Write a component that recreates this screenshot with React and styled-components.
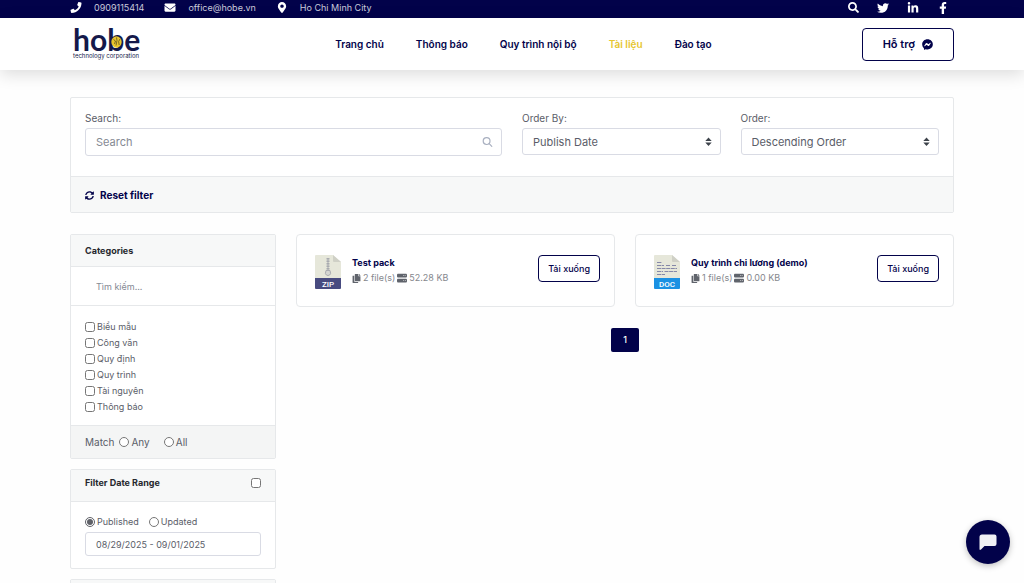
import { useState } from 'react'
import styled, { createGlobalStyle } from 'styled-components'
import {
    FaPhone, FaEnvelope, FaMapMarkerAlt, FaSearch, FaTwitter, FaLinkedinIn, FaFacebookF,
    FaFacebookMessenger, FaSyncAlt, FaCopy
} from 'react-icons/fa'
import { FaServer } from 'react-icons/fa6'

const navy = "#02024a"
const border = "#e6e8ea"
const muted = "#f7f8f8"

const GlobalStyle = createGlobalStyle`
    * {
        box-sizing: border-box;
    }
    body {
        margin: 0;
        background-color: #fefefe;
        color: #5a5d68;
        font-family: Inter, "Noto Sans", sans-serif;
        font-size: 9px;
        line-height: 16px;
    }
    button, input, select {
        font: inherit;
        color: inherit;
    }
    a {
        color: inherit;
        text-decoration: none;
    }
`
const Inner = styled.div`
    display: flex;
    align-items: center;
    padding: 0 70px;
`
const TopBar = styled.div`
    background-color: ${navy};
    color: #c9cadb;
`
const TopInner = styled(Inner)`
    height: 18px;
    padding-bottom: 3px;
    justify-content: space-between;
`
const Contacts = styled.div`
    display: flex;
    gap: 20px;
`
const Contact = styled.a`
    display: flex;
    align-items: center;
    gap: 12px;
    svg {
        width: 12px;
        height: 11px;
        color: white;
    }
`
const Socials = styled.div`
    display: flex;
    gap: 18px;
    padding-right: 5px;
    color: white;
`
const SocialLink = styled.a`
    display: flex;
    font-size: 12px;
`
const Header = styled.header`
    background-color: white;
    box-shadow: 0 4px 16px #00000024;
`
const HeaderInner = styled(Inner)`
    height: 52px;
    justify-content: space-between;
`
const Logo = styled.a`
    display: block;
    color: #14194a;
    padding: 0 3px 2px;
`
const LogoName = styled.div`
    display: flex;
    font-family: Lato, sans-serif;
    font-weight: 700;
    font-size: 30px;
    line-height: 25px;
`
const LogoLetter = styled.span`
    position: relative;
`
const LogoMark = styled.svg`
    position: absolute;
    left: 4px;
    top: 9px;
    width: 11px;
    height: 12px;
`
const Tagline = styled.div`
    font-size: 6px;
    line-height: 8px;
`
const Nav = styled.nav`
    flex: 1;
    display: flex;
    justify-content: center;
    gap: 32px;
    padding-left: 42px;
    font-size: 10px;
    font-weight: 600;
`
const NavLink = styled.a`
    color: ${props => props.$active ? "#e6c62f" : navy};
`
const OutlineButton = styled.button`
    display: flex;
    align-items: center;
    justify-content: center;
    gap: 7px;
    height: ${props => props.$large ? "33px" : "27px"};
    padding: 0 ${props => props.$large ? "20px" : "9px"};
    border: 1px solid ${navy};
    border-radius: 4px;
    background-color: white;
    color: ${navy};
    font-size: ${props => props.$large ? "11px" : "9px"};
    font-weight: ${props => props.$large ? 600 : 500};
    white-space: nowrap;
    cursor: pointer;
`
const Page = styled.main`
    padding: 27px 70px 0;
`
const Card = styled.section`
    background-color: white;
    border: 1px solid ${border};
    border-radius: 2px;
`
const Filters = styled.div`
    display: grid;
    grid-template-columns: repeat(4, 1fr);
    gap: 20px;
    padding: 12px 14px 20px;
    font-size: 11px;
`
const Field = styled.div`
    grid-column: span ${props => props.$span || 1};
    min-width: 0;
`
const FieldLabel = styled.label`
    display: block;
    margin-bottom: 2px;
    font-size: 10px;
`
const Control = styled.div`
    position: relative;
    svg {
        position: absolute;
        right: 9px;
        top: 50%;
        transform: translateY(-50%);
        pointer-events: none;
    }
`
const TextBox = styled.input`
    display: block;
    width: 100%;
    height: ${props => props.$small ? "24px" : "28px"};
    padding: 0 10px;
    border: 1px solid ${props => props.$plain ? "transparent" : "#d9dbe4"};
    border-radius: 3px;
    background-color: transparent;
    outline: none;
    &::placeholder {
        color: #858993;
    }
`
const Select = styled.select`
    display: block;
    width: 100%;
    height: 27px;
    padding: 0 10px;
    border: 1px solid #d9dbe4;
    border-radius: 3px;
    background-color: white;
    appearance: none;
`
const ResetBar = styled.div`
    padding: 10px 14px 9px;
    border-top: 1px solid ${border};
    background-color: ${muted};
`
const ResetButton = styled.button`
    display: flex;
    align-items: center;
    gap: 6px;
    padding: 0;
    border: 0;
    background: none;
    color: ${navy};
    font-size: 10px;
    font-weight: 700;
    cursor: pointer;
`
const Columns = styled.div`
    display: grid;
    grid-template-columns: repeat(4, 1fr);
    align-items: start;
    gap: 20px;
    margin-top: 21px;
`
const Sidebar = styled.aside`
    display: flex;
    flex-direction: column;
    gap: 10px;
`
const CardHeader = styled.div`
    display: flex;
    align-items: center;
    justify-content: space-between;
    min-height: 32px;
    padding: 0 14px ${props => props.$raised ? "6px" : 0};
    border-bottom: 1px solid ${border};
    background-color: ${muted};
    color: #26282e;
`
const CardTitle = styled.h2`
    margin: 0;
    font-size: 9px;
    font-weight: 700;
`
const CategorySearch = styled.div`
    padding: 7px 14px;
    border-bottom: 1px solid ${border};
`
const CategoryList = styled.div`
    display: flex;
    flex-direction: column;
    padding: 13px 14px 10px;
`
const Check = styled.label`
    display: flex;
    align-items: center;
    gap: 2px;
    input {
        width: 10px;
        height: 10px;
        margin: 0;
        accent-color: #5f6168;
    }
`
const MatchRow = styled.div`
    display: flex;
    align-items: center;
    gap: 14px;
    padding: 8px 14px;
    border-top: 1px solid ${border};
    background-color: #f4f5f5;
    font-size: 10px;
`
const MatchLabel = styled.span`
    margin-right: -9px;
`
const RangeBody = styled.div`
    padding: 12px 14px;
`
const RangeOptions = styled.div`
    display: flex;
    gap: 10px;
    margin-bottom: 2px;
`
const Results = styled.div`
    grid-column: span 3;
`
const ResultGrid = styled.div`
    display: grid;
    grid-template-columns: repeat(2, 1fr);
    gap: 20px;
`
const FileCard = styled(Card)`
    display: flex;
    align-items: flex-start;
    padding: 20px 14px 17px 18px;
    border-radius: 4px;
    svg {
        flex: none;
    }
`
const FileInfo = styled.div`
    flex: 1;
    min-width: 0;
    padding-left: 11px;
`
const FileTitle = styled.a`
    display: block;
    color: ${navy};
    font-weight: 700;
`
const FileMeta = styled.div`
    display: flex;
    align-items: center;
    gap: 2px;
    color: #85878d;
    line-height: 14px;
    svg {
        color: #60646c;
    }
`
const Pagination = styled.nav`
    display: flex;
    justify-content: center;
    margin-top: 21px;
`
const PageButton = styled.button`
    width: 28px;
    height: 24px;
    padding: 0;
    border: 0;
    border-radius: 2px;
    background-color: ${navy};
    color: white;
    font-weight: 500;
`
const ChatButton = styled.button`
    position: fixed;
    right: 14px;
    bottom: 19px;
    display: flex;
    align-items: center;
    justify-content: center;
    width: 44px;
    height: 44px;
    padding: 0;
    border: 0;
    border-radius: 50%;
    background-color: ${navy};
    box-shadow: 0 2px 6px #00000040;
    cursor: pointer;
`

const navItems = ["Trang chủ", "Thông báo", "Quy trình nội bộ", "Tài liệu", "Đào tạo"]
const categories = ["Biểu mẫu", "Công văn", "Quy định", "Quy trình", "Tài nguyên", "Thông báo"]
const files = [
    { type: "ZIP", title: "Test pack", count: 2, size: "52.28 KB" },
    { type: "DOC", title: "Quy trình chi lương (demo)", count: 1, size: "0.00 KB" },
]

function Arrows() {
    return (
        <svg width="7" height="10" viewBox="0 0 7 10" fill="#3d434b">
            <path d="M0.3 4L3.5 0.5L6.7 4ZM0.3 5.6L3.5 9.1L6.7 5.6Z" />
        </svg>
    )
}

function SearchGlass() {
    return (
        <svg width="11" height="11" viewBox="0 0 11 11" fill="none" stroke="#a9b0c0" strokeWidth="1.2" strokeLinecap="round">
            <circle cx="4.6" cy="4.6" r="3.4" />
            <path d="M7.2 7.2L9.8 9.8" />
        </svg>
    )
}

function FileIcon({ type }) {
    return (
        <svg width="26" height="34" viewBox="0 0 26 34">
            <path d="M1 0H18L26 7V24H0V1Q0 0 1 0Z" fill="#e6e7da" />
            <path d="M18 0L26 7H19Q18 7 18 6Z" fill="#cfd0c6" />
            {type === "ZIP"
                ? <g fill="none" stroke="#a9abb0">
                    <path d="M13 3V15" strokeWidth="3" strokeDasharray="1.5 1" />
                    <path d="M13 3V15" />
                    <path d="M11 15.5H15L15.6 18.5Q15 20.5 13 20.5Q11 20.5 10.4 18.5Z" fill="#d5d6d2" />
                </g>
                : <path d="M3 7.5H8M3 10.5H10M12 10.5H16M18 10.5H22M3 13.5H23M3 16.5H9M10.5 16.5H23M3 19.5H11" stroke="#8588a8" strokeWidth="1.2" strokeDasharray="4 0.6" />}
            <path d="M0 23H26V33Q26 34 25 34H1Q0 34 0 33Z" fill={type === "ZIP" ? "#484b80" : "#1b91e3"} />
            <text x="13" y="31.5" textAnchor="middle" fontFamily="Roboto, sans-serif" fontSize="8" fontWeight="500" fill="white">{type}</text>
        </svg>
    )
}

function App() {
    const [search, setSearch] = useState("")
    const [published, setPublished] = useState(true)
    const [range, setRange] = useState("08/29/2025 - 09/01/2025")

    return (
        <>
            <GlobalStyle />
            <TopBar>
                <TopInner>
                    <Contacts>
                        <Contact href="tel:0909115414"><FaPhone />0909115414</Contact>
                        <Contact href="mailto:office@hobe.vn"><FaEnvelope />office@hobe.vn</Contact>
                        <Contact href="#map"><FaMapMarkerAlt />Ho Chi Minh City</Contact>
                    </Contacts>
                    <Socials>
                        <SocialLink href="#search" aria-label="Search"><FaSearch size={11} /></SocialLink>
                        <SocialLink href="#twitter" aria-label="Twitter"><FaTwitter /></SocialLink>
                        <SocialLink href="#linkedin" aria-label="LinkedIn"><FaLinkedinIn /></SocialLink>
                        <SocialLink href="#facebook" aria-label="Facebook"><FaFacebookF /></SocialLink>
                    </Socials>
                </TopInner>
            </TopBar>
            <Header>
                <HeaderInner>
                    <Logo href="#">
                        <LogoName>
                            <span>ho</span>
                            <LogoLetter>
                                b
                                <LogoMark viewBox="0 0 11 12">
                                    <ellipse cx="5.5" cy="6" rx="5.2" ry="5.7" fill="#e8c62c" />
                                    <path d="M2.5 3.5L4.5 5L3.5 8M5.5 1.5L6 4.5L5 9.5M9 3L7.6 5.5L8.2 9" stroke="#4b4220" strokeWidth="0.7" fill="none" />
                                </LogoMark>
                            </LogoLetter>
                            <span>e</span>
                        </LogoName>
                        <Tagline>technology corporation</Tagline>
                    </Logo>
                    <Nav>
                        {navItems.map(item => (
                            <NavLink href="#" key={item} $active={item === "Tài liệu"}>{item}</NavLink>
                        ))}
                    </Nav>
                    <OutlineButton $large>Hỗ trợ <FaFacebookMessenger /></OutlineButton>
                </HeaderInner>
            </Header>
            <Page>
                <Card>
                    <Filters>
                        <Field $span={2}>
                            <FieldLabel htmlFor="search">Search:</FieldLabel>
                            <Control>
                                <TextBox id="search" placeholder="Search" value={search} onChange={e => setSearch(e.target.value)} />
                                <SearchGlass />
                            </Control>
                        </Field>
                        <Field>
                            <FieldLabel htmlFor="orderBy">Order By:</FieldLabel>
                            <Control>
                                <Select id="orderBy">
                                    <option>Publish Date</option>
                                    <option>Title</option>
                                </Select>
                                <Arrows />
                            </Control>
                        </Field>
                        <Field>
                            <FieldLabel htmlFor="order">Order:</FieldLabel>
                            <Control>
                                <Select id="order">
                                    <option>Descending Order</option>
                                    <option>Ascending Order</option>
                                </Select>
                                <Arrows />
                            </Control>
                        </Field>
                    </Filters>
                    <ResetBar>
                        <ResetButton onClick={() => setSearch("")}><FaSyncAlt size={9} />Reset filter</ResetButton>
                    </ResetBar>
                </Card>
                <Columns>
                    <Sidebar>
                        <Card>
                            <CardHeader><CardTitle>Categories</CardTitle></CardHeader>
                            <CategorySearch>
                                <TextBox $small $plain placeholder="Tìm kiếm..." aria-label="Tìm kiếm" />
                            </CategorySearch>
                            <CategoryList>
                                {categories.map(name => (
                                    <Check key={name}><input type="checkbox" />{name}</Check>
                                ))}
                            </CategoryList>
                            <MatchRow>
                                <MatchLabel>Match</MatchLabel>
                                <Check><input type="radio" name="match" />Any</Check>
                                <Check><input type="radio" name="match" />All</Check>
                            </MatchRow>
                        </Card>
                        <Card>
                            <CardHeader $raised>
                                <CardTitle>Filter Date Range</CardTitle>
                                <Check><input type="checkbox" aria-label="Filter Date Range" /></Check>
                            </CardHeader>
                            <RangeBody>
                                <RangeOptions>
                                    <Check><input type="radio" name="range" checked={published} onChange={() => setPublished(true)} />Published</Check>
                                    <Check><input type="radio" name="range" checked={!published} onChange={() => setPublished(false)} />Updated</Check>
                                </RangeOptions>
                                <TextBox $small aria-label="Date range" value={range} onChange={e => setRange(e.target.value)} />
                            </RangeBody>
                        </Card>
                        <Card>
                            <CardHeader />
                        </Card>
                    </Sidebar>
                    <Results>
                        <ResultGrid>
                            {files.map(file => (
                                <FileCard as="article" key={file.title}>
                                    <FileIcon type={file.type} />
                                    <FileInfo>
                                        <FileTitle href="#">{file.title}</FileTitle>
                                        <FileMeta>
                                            <FaCopy size={9} />
                                            <span>{file.count} file(s)</span>
                                            <FaServer size={10} />
                                            <span>{file.size}</span>
                                        </FileMeta>
                                    </FileInfo>
                                    <OutlineButton>Tải xuống</OutlineButton>
                                </FileCard>
                            ))}
                        </ResultGrid>
                        <Pagination>
                            <PageButton>1</PageButton>
                        </Pagination>
                    </Results>
                </Columns>
            </Page>
            <ChatButton aria-label="Chat">
                <svg width="18" height="17" viewBox="0 0 18 17" fill="#f1f1f5">
                    <path d="M3 0.5H15.5Q17.5 0.5 17.5 2.5V10Q17.5 12 15.5 12H5.5L2 15.6Q0.5 16.6 0.5 15V3Q0.5 0.5 3 0.5Z" />
                </svg>
            </ChatButton>
        </>
    )
}

export default App
